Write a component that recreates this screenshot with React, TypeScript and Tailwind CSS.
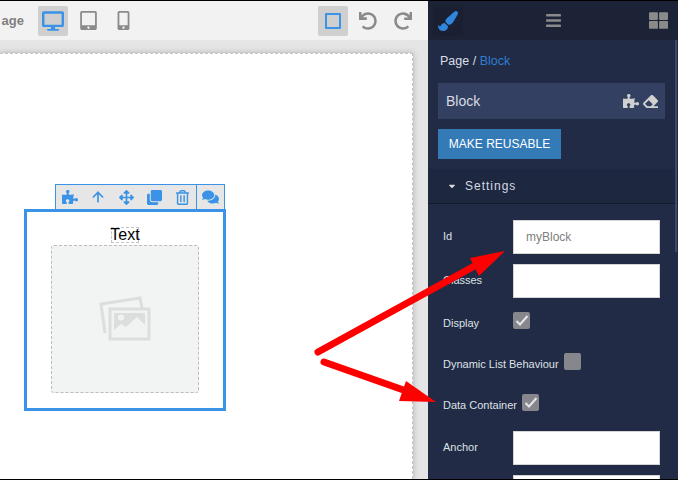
import { FaDesktop, FaTabletAlt, FaMobileAlt, FaUndo, FaRedo, FaPaintBrush, FaBars, FaThLarge, FaPuzzlePiece, FaEraser, FaArrowsAlt, FaClone, FaRegTrashAlt, FaComments, FaCaretDown } from 'react-icons/fa';
import { ArrowUp } from 'lucide-react';

function Field({ label, value }: { label: string; value?: string }) {
    return (
        <div className="mb-[10px] flex h-[34px] items-center pl-[15px]">
            <span className="-mt-[2px] w-[70px] text-[11px] text-[#dde0e6]">{label}</span>
            <div className="flex h-[34px] w-[147px] items-center border border-[#d5d5d5] bg-white pl-[12px] text-[12px] text-[#808080]">
                {value}
            </div>
        </div>
    );
}

function Check({ on }: { on?: boolean }) {
    return (
        <div className="flex h-[17px] w-[17px] items-center justify-center rounded-[2px] bg-[#85878d]">
            {on && (
                <svg width="17" height="17" viewBox="0 0 17 17">
                    <path d="M3.5 9 L7 12.5 L14.5 4" fill="none" stroke="#e6e6e6" strokeWidth="2" />
                </svg>
            )}
        </div>
    );
}

function ImagesIcon() {
    return (
        <svg width="52" height="46" viewBox="0 0 52 46" className="text-[#dcdede]">
            <path d="M6 37 L2 8 L41 2 L43 12" fill="none" stroke="currentColor" strokeWidth="3" />
            <rect x="11" y="13" width="39" height="30" fill="#f1f3f3" stroke="currentColor" strokeWidth="3" />
            <path d="M15 17 H46 V29 L38 21 L27 31 L22 28 L15 34 Z" fill="currentColor" />
            <circle cx="22" cy="21.5" r="3" fill="#f1f3f3" />
        </svg>
    );
}

export default function App() {
    return (
        <div className="relative flex h-[480px] w-[678px] overflow-hidden border-y border-black font-['Liberation_Sans',sans-serif]">
            {/* Left: editor */}
            <div className="flex w-[428px] flex-col bg-[#e5e5e5]">
                <div className="flex h-[39px] shrink-0 items-center bg-[#f2f2f2]">
                    <div className="w-[24px] overflow-hidden whitespace-nowrap text-right text-[13px] font-bold text-[#808080]">
                        <span className="float-right">age</span>
                    </div>
                    <div className="ml-[14px] flex h-[30px] w-[30px] items-center justify-center rounded-[2px] bg-[#cfcfcf]">
                        <FaDesktop className="h-[20px] w-[22px] text-[#3a93e6]" />
                    </div>
                    <div className="ml-[5px] flex h-[30px] w-[30px] items-center justify-center">
                        <FaTabletAlt className="h-[19px] w-[17px] text-[#8a8a8a]" />
                    </div>
                    <div className="ml-[5px] flex h-[30px] w-[30px] items-center justify-center">
                        <FaMobileAlt className="h-[19px] w-[13px] text-[#8a8a8a]" />
                    </div>
                    <div className="ml-auto flex h-[30px] w-[30px] items-center justify-center rounded-[2px] bg-[#cfcfcf]">
                        <div className="h-[16px] w-[16px] rounded-[1px] border-2 border-[#3a93e6]" />
                    </div>
                    <div className="ml-[5px] flex h-[30px] w-[30px] items-center justify-center">
                        <FaUndo className="h-[18px] w-[18px] text-[#8a8a8a]" />
                    </div>
                    <div className="ml-[5px] mr-[10px] flex h-[30px] w-[30px] items-center justify-center">
                        <FaRedo className="h-[18px] w-[18px] text-[#8a8a8a]" />
                    </div>
                </div>
                <div className="flex-1 pr-[15px] pt-[13px]">
                    <div className="h-full w-[413px] border-r border-t border-dashed border-[#c4c4c4] bg-white pl-[24px] pt-[130px] shadow-[0_0_6px_rgba(0,0,0,0.25)]">
                        <div className="ml-[31px] flex h-[25px] w-[170px] border border-b-0 border-[#3a93e6] bg-[#e6e6e6] text-[#3a93e6]">
                            <div className="flex w-[141px] items-center border-r border-[#3a93e6]">
                                <div className="flex w-[28px] justify-center"><FaPuzzlePiece className="h-[16px] w-[16px]" /></div>
                                <div className="flex w-[28px] justify-center"><ArrowUp className="h-[16px] w-[16px]" strokeWidth={2.5} /></div>
                                <div className="flex w-[28px] justify-center"><FaArrowsAlt className="h-[15px] w-[15px]" /></div>
                                <div className="flex w-[28px] justify-center"><FaClone className="h-[15px] w-[15px]" /></div>
                                <div className="flex w-[28px] justify-center"><FaRegTrashAlt className="h-[15px] w-[15px]" /></div>
                            </div>
                            <div className="flex flex-1 items-center justify-center">
                                <FaComments className="h-[16px] w-[17px]" />
                            </div>
                        </div>
                        <div className="flex h-[202px] w-[202px] flex-col items-center border-[3px] border-[#3a93e6] bg-white">
                            <div className="mt-[15px] flex h-[16px] w-[28px] items-center justify-center whitespace-nowrap border border-dashed border-[#c4c4c4] text-[16px] text-black">
                                Text
                            </div>
                            <div className="mt-[2px] flex h-[148px] w-[148px] items-center justify-center rounded-[3px] border border-dashed border-[#bcbcbc] bg-[#f2f4f4]">
                                <ImagesIcon />
                            </div>
                        </div>
                    </div>
                </div>
            </div>

            {/* Right: sidebar */}
            <div className="w-[250px] bg-[#212b45]">
                <div className="flex h-[39px] items-center bg-[#1c2336]">
                    <div className="ml-[5px] flex h-[30px] w-[30px] items-center justify-center rounded-[2px] bg-[#1a2032]">
                        <FaPaintBrush className="h-[20px] w-[20px] text-[#2f86dc]" />
                    </div>
                    <FaBars className="ml-[82px] h-[17px] w-[17px] text-[#8a8a8a]" />
                    <FaThLarge className="ml-[87px] h-[19px] w-[19px] text-[#8a8a8a]" />
                </div>
                <div className="pl-[12px] pt-[11px] text-[12.5px] leading-[20px] text-[#dcdfe6]">
                    Page / <span className="text-[#2f7fd0]">Block</span>
                </div>
                <div className="ml-[10px] mt-[12px] flex h-[36px] w-[227px] items-center bg-[#334062] pl-[8px] pr-[7px] text-[14px] text-[#d8dbe2]">
                    Block
                    <FaPuzzlePiece className="ml-auto h-[16px] w-[16px] text-[#d0d0d0]" />
                    <FaEraser className="ml-[4px] h-[15px] w-[15px] text-[#d0d0d0]" />
                </div>
                <div className="ml-[10px] mt-[10px] flex h-[30px] w-[123px] items-center justify-center bg-[#337ab7] text-[12px] text-white">
                    MAKE REUSABLE
                </div>
                <div className="mt-[10px] flex h-[35px] items-center gap-[8px] border-b border-[#141a2b] bg-[#1e2740] pl-[19px] text-[12px] tracking-[1px] text-[#d5d9e0]">
                    <FaCaretDown className="h-[10px] w-[10px] text-[#dcdcdc]" />
                    Settings
                </div>
                <div className="pt-[16px]">
                    <Field label="Id" value="myBlock" />
                    <Field label="Classes" />
                    <div className="mt-[14px] flex h-[41px] items-start pl-[15px] text-[11px] leading-[17px] text-[#dde0e6]">
                        <span className="mt-[3px] w-[70px]">Display</span>
                        <Check on />
                    </div>
                    <div className="flex h-[41px] items-start gap-[5px] pl-[15px] text-[11px] leading-[17px] text-[#dde0e6]">
                        <span className="mt-[3px]">Dynamic List Behaviour</span>
                        <Check />
                    </div>
                    <div className="flex h-[37px] items-start gap-[5px] pl-[15px] text-[11px] leading-[17px] text-[#dde0e6]">
                        <span className="mt-[3px]">Data Container</span>
                        <Check on />
                    </div>
                    <Field label="Anchor" />
                    <div className="ml-[85px] h-[10px] w-[147px] border border-[#d5d5d5] bg-white" />
                </div>
            </div>
            <div className="absolute right-[1px] top-[39px] h-[212px] w-[2px] bg-[#3d4966]" />

            {/* Annotation arrows */}
            <svg className="absolute left-0 top-[-1px]" width="678" height="480" viewBox="0 0 678 480">
                <path d="M318 352 L480 263" stroke="#ff0000" strokeWidth="7" strokeLinecap="round" />
                <polygon points="505,251 470,258 479,276" fill="#ff0000" />
                <path d="M324 362 L412 393" stroke="#ff0000" strokeWidth="7" strokeLinecap="round" />
                <polygon points="436,402 406,381 399,401" fill="#ff0000" />
            </svg>
        </div>
    );
}
